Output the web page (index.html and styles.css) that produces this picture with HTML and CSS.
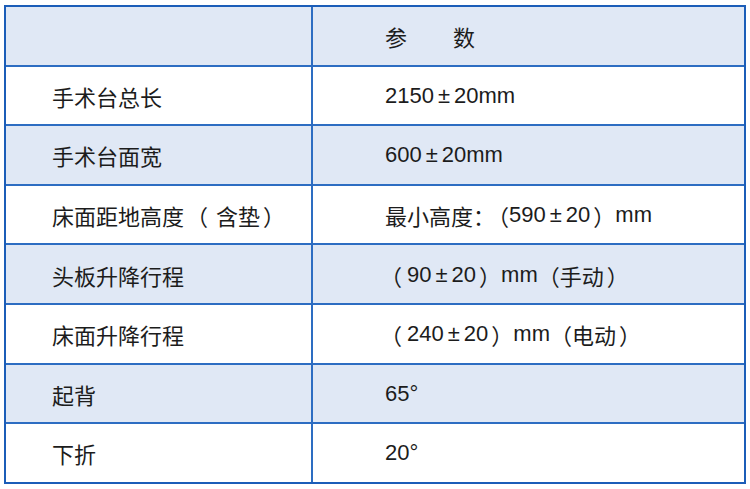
FILE: index.html
```html
<!DOCTYPE html>
<html lang="zh">
<head>
<meta charset="utf-8">
<link rel="stylesheet" href="styles.css">
</head>
<body>
<div class="table">
  <div class="row shade">
    <div class="cell name"></div>
    <div class="cell val"><span class="h1">参</span><span>数</span></div>
  </div>
  <div class="row">
    <div class="cell name">手术台总长</div>
    <div class="cell val">2150<span class="pm">±</span>20mm</div>
  </div>
  <div class="row shade">
    <div class="cell name">手术台面宽</div>
    <div class="cell val">600<span class="pm">±</span>20mm</div>
  </div>
  <div class="row">
    <div class="cell name">床面距地高度<span class="po wide">（</span>含垫<span class="pc shift">）</span></div>
    <div class="cell val">最小高度<span class="colon">：</span><span class="po">（</span>590<span class="pm">±</span>20<span class="pc shift">）</span>mm</div>
  </div>
  <div class="row shade">
    <div class="cell name">头板升降行程</div>
    <div class="cell val"><span class="po lead">（</span>90<span class="pm">±</span>20<span class="pc shift">）</span>mm<span class="po">（</span>手动<span class="pc shift">）</span></div>
  </div>
  <div class="row">
    <div class="cell name">床面升降行程</div>
    <div class="cell val"><span class="po lead">（</span>240<span class="pm">±</span>20<span class="pc shift">）</span>mm<span class="po">（</span>电动<span class="pc shift">）</span></div>
  </div>
  <div class="row shade">
    <div class="cell name">起背</div>
    <div class="cell val">65°</div>
  </div>
  <div class="row">
    <div class="cell name">下折</div>
    <div class="cell val">20°</div>
  </div>
</div>
</body>
</html>
```

FILE: styles.css
```css
html, body {
  margin: 0;
  padding: 0;
  background: #ffffff;
}

body {
  padding: 5px 4px 0 4px;
  font-family: "Liberation Sans", "Noto Sans CJK SC", sans-serif;
  font-size: 22px;
  color: #1c1c1c;
}

.table {
  width: 742px;
  box-sizing: border-box;
  border: 2px solid #1b5db8;
}

.row {
  display: grid;
  grid-template-columns: 307px 1fr;
  height: 57.6px;
  background: #ffffff;
}

.row + .row {
  border-top: 2px solid #2d6dc2;
}

.row.shade {
  background: #e0e8f5;
}

.cell {
  display: flex;
  align-items: center;
  padding-top: 1px;
  box-sizing: border-box;
  white-space: nowrap;
}

.name {
  border-right: 2px solid #2d6dc2;
  padding-left: 46px;
}

.val {
  padding-left: 72px;
}

.h1 {
  margin-right: 46px;
}

.pm {
  margin: 0 4px;
}

.po,
.pc,
.colon {
  font-family: "Noto Sans CJK SC", sans-serif;
}

.colon {
  letter-spacing: -8px;
}

.po.lead {
  margin-left: -5px;
  margin-right: 5px;
}

.po.wide {
  margin-left: 2px;
  margin-right: 8px;
}

.pc.shift {
  margin-left: 3px;
}
```
